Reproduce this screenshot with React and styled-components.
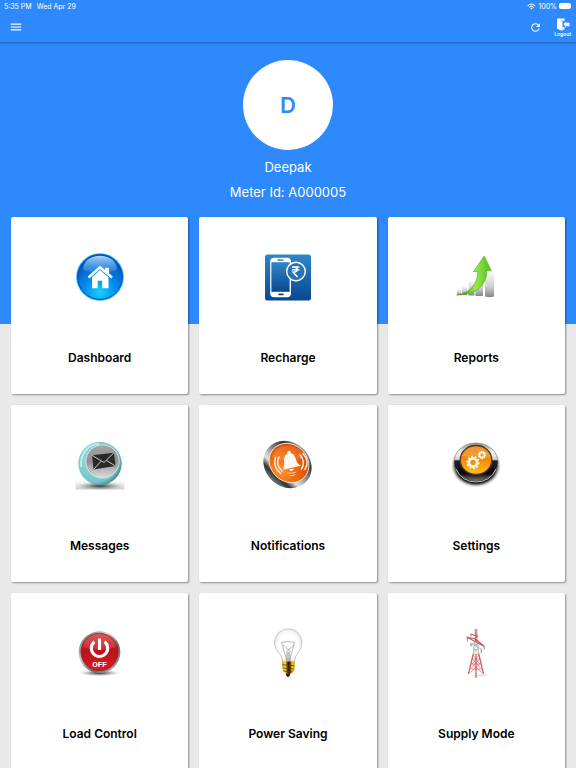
import React from 'react';
import styled, { createGlobalStyle } from 'styled-components';
import { MdMenu, MdRefresh, MdWifi } from 'react-icons/md';

const HomeIcon = () => (
  <Icon viewBox="0 0 70 64">
    <defs>
      <radialGradient id="home" cx="0.5" cy="0.85" r="0.75">
        <stop offset="0" stopColor="#19d2ff" />
        <stop offset="0.5" stopColor="#0089ee" />
        <stop offset="1" stopColor="#0350bd" />
      </radialGradient>
      <linearGradient id="homeShine" x1="0" y1="0" x2="0" y2="1">
        <stop offset="0" stopColor="#c4e6ff" stopOpacity="0.9" />
        <stop offset="1" stopColor="#4aa6f4" stopOpacity="0.35" />
      </linearGradient>
    </defs>
    <circle cx="35" cy="32" r="23.8" fill="#1cb8f5" />
    <circle cx="35" cy="32" r="22.4" fill="url(#home)" stroke="#0750b0" strokeWidth="1" />
    <path d="M18 25 C18 6 52 6 52 25 Q35 31 18 25Z" fill="url(#homeShine)" />
    <path d="M23.5 32.5 L35 22.3 L47 32.5" fill="none" stroke="#fff" strokeWidth="2.4" />
    <path d="M40 22.7h4v7l-4-3.5zM27 32.2l8-7.2 8.5 7.2v11h-6.3v-7.4h-4.5v7.4H27z" fill="#fff" />
  </Icon>
);

const RechargeIcon = () => (
  <Icon viewBox="-2 0 70 64">
    <defs>
      <linearGradient id="recharge" x1="0" y1="0" x2="0" y2="1">
        <stop offset="0" stopColor="#2f86c9" />
        <stop offset="1" stopColor="#09478f" />
      </linearGradient>
    </defs>
    <rect x="10" y="9.5" width="46" height="46" rx="2.5" fill="url(#recharge)" />
    <rect x="15.2" y="12.8" width="20.8" height="39.4" rx="4" fill="#fff" />
    <rect x="16.4" y="17.2" width="18.2" height="29.6" fill="url(#recharge)" />
    <path d="M23 15.2h5" stroke="#236fae" strokeWidth="1.2" strokeLinecap="round" />
    <path d="M24 49.4h4" stroke="#08478e" strokeWidth="1.6" strokeLinecap="round" />
    <circle cx="41" cy="26.5" r="9.3" fill="#2873b5" stroke="#fff" strokeWidth="1.4" />
    <path d="M37 22h7.4M37 24.7h7.4M38 22c5.6 0 5.6 5.2 0 5.2l4.6 4.8" fill="none" stroke="#fff" strokeWidth="1.5" />
  </Icon>
);

const ReportsIcon = () => (
  <Icon viewBox="-4 0 70 64">
    <defs>
      <linearGradient id="bars" x1="0" y1="0" x2="0" y2="1">
        <stop offset="0" stopColor="#fafafa" />
        <stop offset="0.6" stopColor="#cccccc" />
        <stop offset="1" stopColor="#858585" />
      </linearGradient>
      <linearGradient id="arrow" x1="0" y1="0" x2="1" y2="0">
        <stop offset="0" stopColor="#26830b" />
        <stop offset="0.55" stopColor="#9be64a" />
        <stop offset="1" stopColor="#4fbd1c" />
      </linearGradient>
    </defs>
    <rect x="12" y="44" width="4" height="6" fill="url(#bars)" />
    <rect x="17" y="41" width="5" height="9" fill="url(#bars)" />
    <rect x="23.5" y="36" width="6" height="14.5" fill="url(#bars)" />
    <rect x="30.5" y="33" width="7.5" height="18" fill="url(#bars)" />
    <path d="M40 28q4-2 9 0v23.5q-4.5 1.3-9 0z" fill="url(#bars)" />
    <path d="M39.2 11 L46.3 25.8 L41.8 25.5 C42 40 31 50.5 11.5 50 C26 48 32.8 38 32.8 26.2 L28.5 26.8Z" fill="url(#arrow)" stroke="#43a821" strokeWidth="0.6" />
  </Icon>
);

const MessagesIcon = () => (
  <Icon viewBox="0 0 70 64">
    <defs>
      <radialGradient id="ring" cx="0.4" cy="0.4" r="0.62">
        <stop offset="0" stopColor="#9edde0" />
        <stop offset="0.85" stopColor="#79c5c9" />
        <stop offset="1" stopColor="#4a8e93" />
      </radialGradient>
      <linearGradient id="plate" x1="0" y1="0" x2="0" y2="1">
        <stop offset="0" stopColor="#a5a5a5" />
        <stop offset="0.5" stopColor="#909090" />
        <stop offset="1" stopColor="#dedede" />
      </linearGradient>
      <linearGradient id="ground" x1="0" y1="0" x2="0" y2="1">
        <stop offset="0" stopColor="#777" stopOpacity="0" />
        <stop offset="1" stopColor="#555" stopOpacity="0.6" />
      </linearGradient>
      <radialGradient id="floor">
        <stop offset="0" stopColor="#222" stopOpacity="0.9" />
        <stop offset="1" stopColor="#777" stopOpacity="0" />
      </radialGradient>
    </defs>
    <rect x="10.5" y="47" width="49" height="9.5" fill="url(#ground)" opacity="0.5" />
    <ellipse cx="35" cy="53" rx="23" ry="4" fill="url(#floor)" />
    <circle cx="35" cy="30.5" r="21.7" fill="url(#ring)" />
    <path d="M16 34C15 20 24 11 34 11" fill="none" stroke="#c9f4f3" strokeWidth="2" opacity="0.8" />
    <circle cx="37.5" cy="28.5" r="16.6" fill="url(#plate)" stroke="#d3e7e7" strokeWidth="0.9" />
    <path d="M27 22.3 L49 19.7 L50.5 33 L28.5 36.5Z" fill="#292929" />
    <path d="M27 22.3 L39 29.5 L49 19.7 M28.5 36.5 L36 28.3 M50.5 33 L41.5 27.5" fill="none" stroke="#c9c9c9" strokeWidth="1" />
  </Icon>
);

const NotificationsIcon = () => (
  <Icon viewBox="-2 0 70 64">
    <defs>
      <linearGradient id="steel" x1="0" y1="0" x2="0" y2="1">
        <stop offset="0" stopColor="#a0a0a0" />
        <stop offset="0.2" stopColor="#333" />
        <stop offset="0.45" stopColor="#8b8b8b" />
        <stop offset="0.7" stopColor="#e2e2e2" />
        <stop offset="0.85" stopColor="#333" />
        <stop offset="1" stopColor="#777" />
      </linearGradient>
      <radialGradient id="alert" cx="0.5" cy="0.8" r="0.7">
        <stop offset="0" stopColor="#ff9331" />
        <stop offset="0.6" stopColor="#ee650b" />
        <stop offset="1" stopColor="#d94a00" />
      </radialGradient>
    </defs>
    <ellipse cx="32.5" cy="31.5" rx="25.5" ry="22.3" transform="rotate(42 32.5 31.5)" fill="url(#steel)" />
    <ellipse cx="34" cy="30" rx="21" ry="18.4" transform="rotate(42 34 30)" fill="url(#alert)" stroke="#f4e7df" strokeWidth="0.9" />
    <path d="M17 24C20 9 42 9 50 23Q36 33 17 24Z" fill="#ffae70" opacity="0.3" />
    <g fill="none" stroke="#ffe8d7" strokeWidth="1.6" strokeLinecap="round">
      <path d="M24 24q-4 7 3 14M20.5 24.5q-3 9 5 16" />
      <path d="M45 22q6 7 1.5 14M48 20.5q7 8 2 16" />
    </g>
    <path d="M33.2 18.3c2-.8 3 1 2.5 2 5.3.8 4.8 7.7 7 10l3.1 2.4-17.7 4 .8-3.5c1.3-3.6-2-9.4 3.5-12.5-.2-1 0-2 .8-2.4z" fill="#fff8f1" />
    <path d="M34 36.5q3 3.5 5-1z" fill="#fff" />
    <path d="M32 40q5 1 9-1M34 42.5q3 .6 6-.8" fill="none" stroke="#ffd0a0" strokeWidth="1" />
  </Icon>
);

const Gear = ({ cx, cy, r }) => (
  <g fill="none" stroke="#fff8e8">
    <circle cx={cx} cy={cy} r={r} strokeWidth={r * 0.65} />
    <circle cx={cx} cy={cy} r={r * 1.43} strokeWidth={r * 0.4} pathLength="20" strokeDasharray="1 1" />
  </g>
);

const SettingsIcon = () => (
  <Icon viewBox="-4 0 70 64">
    <defs>
      <linearGradient id="rim" x1="0" y1="0" x2="0" y2="1">
        <stop offset="0" stopColor="#8c8c8c" />
        <stop offset="0.25" stopColor="#f5f5f5" />
        <stop offset="0.43" stopColor="#d5d5d5" />
        <stop offset="0.47" stopColor="#242424" />
        <stop offset="0.8" stopColor="#090909" />
        <stop offset="1" stopColor="#777" />
      </linearGradient>
      <linearGradient id="settings" x1="0" y1="0" x2="0" y2="1">
        <stop offset="0" stopColor="#e87c0e" />
        <stop offset="0.5" stopColor="#f58a03" />
        <stop offset="1" stopColor="#ffc12c" />
      </linearGradient>
      <radialGradient id="base">
        <stop offset="0.8" stopColor="#111" />
        <stop offset="1" stopColor="#aaa" stopOpacity="0" />
      </radialGradient>
    </defs>
    <ellipse cx="31" cy="33" rx="25" ry="21.5" fill="url(#base)" />
    <ellipse cx="31" cy="29" rx="22" ry="19" fill="url(#rim)" stroke="#777" strokeWidth="0.6" />
    <path d="M11 36Q17 49 31 49T51 36" fill="none" stroke="#bbb" strokeWidth="1" />
    <ellipse cx="31" cy="27" rx="15.8" ry="14.5" fill="url(#settings)" stroke="#4e3922" strokeWidth="1.3" />
    <path d="M17 23Q20 14 31 13.5Q43 14 45.5 24Q30 26 17 23Z" fill="#ffce8b" opacity="0.3" />
    <Gear cx={28} cy={29.5} r={4.1} />
    <Gear cx={37} cy={22} r={2.6} />
  </Icon>
);

const LoadIcon = () => (
  <Icon viewBox="0 0 70 64">
    <defs>
      <linearGradient id="chrome" x1="0" y1="0" x2="1" y2="1">
        <stop offset="0" stopColor="#555" />
        <stop offset="0.35" stopColor="#d0d0d0" />
        <stop offset="0.65" stopColor="#686868" />
        <stop offset="1" stopColor="#c2c2c2" />
      </linearGradient>
      <linearGradient id="power" x1="0" y1="0" x2="0" y2="1">
        <stop offset="0" stopColor="#d8474b" />
        <stop offset="0.45" stopColor="#bd1118" />
        <stop offset="1" stopColor="#d41d22" />
      </linearGradient>
      <radialGradient id="powerFloor">
        <stop offset="0" stopColor="#222" />
        <stop offset="1" stopColor="#888" stopOpacity="0" />
      </radialGradient>
    </defs>
    <ellipse cx="34.5" cy="52" rx="20" ry="3.2" fill="url(#powerFloor)" />
    <circle cx="34.5" cy="31.2" r="20.9" fill="url(#chrome)" />
    <circle cx="34.5" cy="31" r="18.6" fill="url(#power)" stroke="#8d1519" strokeWidth="0.7" />
    <path d="M18 26C20 9 49 9 51 26Q34 32 18 26Z" fill="#ff9a9d" opacity="0.2" />
    <path d="M29.5 20.8a8.2 8.2 0 1 0 10 0" fill="none" stroke="#fff" strokeWidth="3" />
    <path d="M34.5 17.5v11.5" stroke="#fff" strokeWidth="3.2" />
    <OffText x="34.5" y="46">OFF</OffText>
  </Icon>
);

const BulbIcon = () => (
  <Icon viewBox="-2 0 70 64">
    <defs>
      <radialGradient id="glass">
        <stop offset="0.7" stopColor="#fff" />
        <stop offset="1" stopColor="#ececec" />
      </radialGradient>
      <linearGradient id="brass" x1="0" y1="0" x2="1" y2="0">
        <stop offset="0" stopColor="#d89a00" />
        <stop offset="0.25" stopColor="#ffd83a" />
        <stop offset="0.45" stopColor="#2c1c00" />
        <stop offset="0.6" stopColor="#3c2600" />
        <stop offset="0.75" stopColor="#f8c021" />
        <stop offset="1" stopColor="#d89a00" />
      </linearGradient>
    </defs>
    <path d="M27.5 41C27.5 32 19.5 31 19.5 21.5a13.7 13.7 0 0 1 27.4 0C46.9 31 39.5 32 39.5 41Z" fill="url(#glass)" stroke="#b9b9b9" strokeWidth="0.8" />
    <path d="M32 40L26.5 21.5q6.5-2 13 0L34.5 40M28 24l8 7M39 24l-8 7" fill="none" stroke="#888" strokeWidth="0.6" />
    <path d="M31.5 31h3.5l1 10h-5.5z" fill="#999" opacity="0.6" />
    <path d="M27 40.5h13l-.5 3 .8 1-1 2 .5 1.5-1 2-2 2.5h-6.5l-2-2.5-.8-1.5.5-1.5-1-2 .5-1.5z" fill="url(#brass)" />
    <path d="M27.5 43.7l11.5 1M27.7 47l11 1M28.5 50l9 .8" stroke="#5c3c00" strokeWidth="0.8" />
    <path d="M30.5 52.5h5l-1.5 3.3h-2z" fill="#1a1408" />
  </Icon>
);

const TowerIcon = () => (
  <Icon viewBox="-4 0 70 64">
    <path d="M36 53l9 1.5-9 1-11-.5z" fill="#e4e4e4" />
    <g fill="none">
      <g stroke="#aab4b6" strokeWidth="0.8">
        <path d="M29.5 20L28.2 33h5.6L32.8 20M29 24h4.5M28.5 28.5h5M29 22l4.5 5-5 5M33 22l-4.5 5 5 5" />
        <path d="M25.5 22.5l11 5.5M25.5 22.5l7 .5" />
      </g>
      <g stroke="#c8585c">
        <path d="M30.3 8v13M31.8 8v13M29.8 12l2.5 3-2.5 3 2.5 3" strokeWidth="0.9" />
        <path d="M25.5 13l7.5 2.5M21.5 16l18 9.5M21.5 16l9 2 9 7.5" strokeWidth="1.1" />
        <path d="M28.2 33L23.5 53M33.8 33L38.5 53M31 33v24" strokeWidth="1.2" />
        <path d="M27 38h8M26 43h10.5M24.5 48h13M28.2 34l6.5 9-10 9M33.8 34l-6.5 9 10 9M27 38l8.5 9M35 38l-8.5 9" strokeWidth="0.6" />
      </g>
      <path d="M22.3 16.5v4M26 13v2.5M39.3 25.5v3M26 22.5v3M36.3 28v4" stroke="#829096" strokeWidth="1.1" />
    </g>
  </Icon>
);

const LogoutIcon = () => (
  <svg width="14" height="13" viewBox="0 0 14 13" aria-hidden="true">
    <path d="M1 0.5h7.5V3H6.5V2H4.5L6.5 3v10L1 10.7z" fill="#fff" />
    <path d="M6.5 9h2v2.5h-2zM7.5 6L10 3.5v1.3h3.5v3.4H10v1.3z" fill="#fff" />
  </svg>
);

const menuItems = [
  { name: 'Dashboard', icon: <HomeIcon /> },
  { name: 'Recharge', icon: <RechargeIcon /> },
  { name: 'Reports', icon: <ReportsIcon /> },
  { name: 'Messages', icon: <MessagesIcon /> },
  { name: 'Notifications', icon: <NotificationsIcon /> },
  { name: 'Settings', icon: <SettingsIcon /> },
  { name: 'Load Control', icon: <LoadIcon /> },
  { name: 'Power Saving', icon: <BulbIcon /> },
  { name: 'Supply Mode', icon: <TowerIcon /> },
];

const App = () => {
  return (
    <Container>
      <GlobalStyle />
      <Header>
        <StatusBar>
          <span>5:35 PM</span>
          <span>Wed Apr 29</span>
          <Battery>
            <MdWifi size={9} />
            <span>100%</span>
            <BatteryLevel />
          </Battery>
        </StatusBar>
        <Toolbar>
          <ToolButton aria-label="Menu">
            <MdMenu size={14} />
          </ToolButton>
          <Actions>
            <ToolButton aria-label="Refresh">
              <MdRefresh size={13} />
            </ToolButton>
            <ToolButton>
              <LogoutIcon />
              <small>Logout</small>
            </ToolButton>
          </Actions>
        </Toolbar>
      </Header>
      <Profile>
        <Avatar>D</Avatar>
        <p>Deepak</p>
        <p>Meter Id: A000005</p>
      </Profile>
      <Menu>
        {menuItems.map((item) => (
          <Card key={item.name}>
            {item.icon}
            <span>{item.name}</span>
          </Card>
        ))}
      </Menu>
    </Container>
  );
};

const GlobalStyle = createGlobalStyle`
  * {
    box-sizing: border-box;
  }

  html {
    scrollbar-width: none;
  }

  body {
    margin: 0;
    background-color: #e9e9e9;
    font-family: Inter, "Liberation Sans", sans-serif;
  }

  button {
    font-family: inherit;
    border: none;
    padding: 0;
    cursor: pointer;
  }
`;

const Container = styled.div`
  min-height: 100vh;
`;

const Header = styled.header`
  position: relative;
  background-color: #2e89fc;
  color: #fff;
  box-shadow: 0 1px 2px rgba(0, 0, 0, 0.3);
`;

const StatusBar = styled.div`
  display: flex;
  align-items: center;
  gap: 5px;
  height: 12px;
  padding: 0 5px 0 4px;
  font-size: 7px;
`;

const Battery = styled.div`
  display: flex;
  align-items: center;
  gap: 2px;
  margin-left: auto;
`;

const BatteryLevel = styled.i`
  width: 12px;
  height: 6px;
  border-radius: 2px;
  background-color: #fff;
`;

const Toolbar = styled.div`
  display: flex;
  align-items: center;
  justify-content: space-between;
  height: 30px;
  padding: 0 5px 0 9px;
`;

const Actions = styled.div`
  display: flex;
  align-items: center;
  gap: 12px;
`;

const ToolButton = styled.button`
  display: flex;
  flex-direction: column;
  align-items: center;
  background-color: transparent;
  color: #fff;

  small {
    font-size: 5px;
    font-weight: 600;
    line-height: 6px;
  }
`;

const Profile = styled.section`
  display: flex;
  flex-direction: column;
  align-items: center;
  padding: 18px 0 119px;
  background-color: #2e89fc;
  color: #fff;

  p {
    margin: 0;
    font-size: 13px;
    line-height: 25px;
  }
`;

const Avatar = styled.div`
  display: flex;
  align-items: center;
  justify-content: center;
  width: 90px;
  height: 90px;
  margin-bottom: 5px;
  border-radius: 50%;
  background-color: #fff;
  color: #2e89fc;
  font-size: 22px;
  font-weight: 600;
`;

const Menu = styled.main`
  display: grid;
  grid-template-columns: repeat(3, 1fr);
  gap: 11px;
  margin-top: -107px;
  padding: 0 11px 11px;
`;

const Card = styled.button`
  display: flex;
  flex-direction: column;
  align-items: center;
  height: 177px;
  padding-top: 28px;
  border-radius: 2px;
  background-color: #fff;
  box-shadow: 1px 1px 2px rgba(0, 0, 0, 0.4);
  color: #000;

  span {
    margin-top: 41px;
    font-size: 12px;
    font-weight: 600;
    line-height: 16px;
  }
`;

const Icon = styled.svg.attrs({ 'aria-hidden': true })`
  width: 70px;
  height: 64px;
`;

const OffText = styled.text`
  fill: #fff;
  font-family: "Liberation Sans Narrow", Roboto, sans-serif;
  font-size: 8px;
  font-weight: 700;
  text-anchor: middle;
`;

export default App;
